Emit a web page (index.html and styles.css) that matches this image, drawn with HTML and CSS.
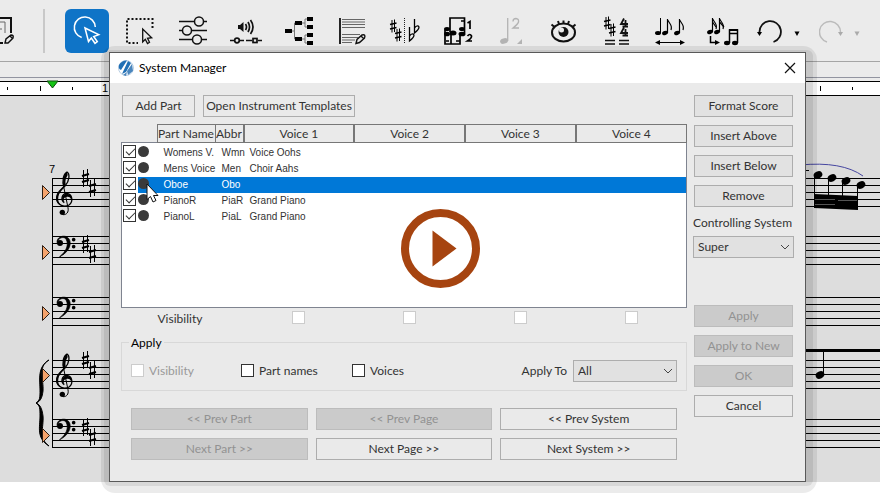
FILE: index.html
```html
<!DOCTYPE html>
<html lang="en">
<head>
<meta charset="utf-8">
<title>System Manager</title>
<link rel="stylesheet" href="styles.css">
</head>
<body>
<svg class="defs" aria-hidden="true">
  <defs>
    <g id="sharp"><path d="M-2 -8V9M2 -9V8" stroke="#000" stroke-width="1"/><path d="M-3.500 -2L3.500 -4M-3.500 4L3.500 2" stroke="#000" stroke-width="2.200"/></g>
    <g id="small-sharp"><path d="M-1 -6V6.500M1.500 -6.500V6" stroke="#000" stroke-width="1"/><path d="M-3 -1.500L3.500 -3M-3 3L3.500 1.500" stroke="#000" stroke-width="1.500"/></g>
    <g id="treble" transform="scale(.3333)">
      <path d="M27 50C20 28 26 8 36 3C45 8 44 30 30 45C14 60 5 70 5 84C7 103 28 110 42 102C56 92 52 68 35 67C20 68 16 87 28 95" fill="none" stroke="#000" stroke-width="4"/>
      <path d="M38 12C32 22 30 30 32 40C24 52 12 62 10 78C8 92 14 100 22 103C10 100 3 92 3 80C4 62 18 54 26 44C22 28 26 12 36 2Z"/>
      <path d="M35 69C50 66 56 88 43 98C54 92 48 74 34 78C27 79 24 84 27 92C18 86 20 70 35 69Z"/>
      <path d="M25 42L39 110C42 124 34 132 24 131" fill="none" stroke="#000" stroke-width="3"/>
      <circle cx="22" cy="124" r="8"/>
    </g>
    <g id="bass" transform="scale(.3333)">
      <path d="M3 22C3 6 18 2 28 4C50 10 50 46 10 66C32 48 38 30 31 14C26 4 10 6 6 18Z" stroke="#000" stroke-width="2"/>
      <circle cx="12" cy="24" r="9"/><circle cx="53" cy="14" r="5.500"/><circle cx="53" cy="35" r="5.500"/>
    </g>
    <path id="marker" d="M0 -7L7 0L0 7Z" fill="#f5a36c" stroke="#2b1c12" stroke-width="1"/>
    <path id="staff" d="M52 0H4000M52 7H4000M52 14H4000M52 21H4000M52 28H4000" stroke="#000" stroke-width="1"/>
    <g id="flag-note"><ellipse cx="0" cy="0" rx="3" ry="2" transform="rotate(-20)"/><path d="M2.500 0V-14C3 -10 8 -9 6 -3" fill="none" stroke="#000" stroke-width="1.200"/></g>
  </defs>
</svg>

<header class="toolbar">
  <button class="tool tool-cut" aria-label="Edit page"><svg width="16" height="44"><path d="M0 9H11V24" fill="none" stroke="#111" stroke-width="2"/><path d="M0 13H5V24M0 20H2" fill="none" stroke="#666"/><path d="M5 34L6 30L11 26Q14 26 13 29L8 34ZM10 27L13 30" fill="none" stroke="#111" stroke-width="1.400"/><path d="M0 34H3" stroke="#111" stroke-width="2"/></svg></button>
  <span class="separator"></span>
  <button class="tool active" aria-label="Select"><svg width="44" height="44" fill="none" stroke="#fff" stroke-width="1.500"><path d="M16.700 28.500A10.500 10.500 0 1 1 30.300 18"/><path d="M20 19L23.500 32.500L26.300 29L30 34.300L32.300 32.500L28.700 27.500L33.700 25.700Z"/></svg></button>
  <button class="tool" aria-label="Area select"><svg width="44" height="44" fill="none" stroke="#111"><path d="M34.500 19V10H9V34H20" stroke-width="2" stroke-dasharray="2 2"/><path d="M24.700 20V33L27.300 30.300L29.500 34.500L31.500 33.300L29.500 29.300L33.700 28.700Z" stroke-width="1.300"/></svg></button>
  <button class="tool" aria-label="Properties"><svg width="44" height="44" fill="#ebebeb" stroke="#111" stroke-width="1.500"><path d="M8 12.500H36M8 21.500H36M8 30.500H36"/><circle cx="28" cy="12.500" r="4.500"/><circle cx="16" cy="21.500" r="4.500"/><circle cx="26" cy="30.500" r="4.500"/></svg></button>
  <button class="tool" aria-label="Playback"><svg width="44" height="44" fill="none" stroke="#111" stroke-width="1.700"><path d="M14 16H16L19.500 13V23L16 20H14Z" fill="#111" stroke="none"/><path d="M21.500 15Q23.500 18 21.500 21M24 13Q27 18 24 23M26.500 11Q31.500 18 26.500 25"/><path d="M6 31.500H10.500M15.500 31.500H20M22 31.500H28M34 31.500H38"/><circle cx="13" cy="31.500" r="2.300"/><rect x="29" y="29.500" width="4" height="4"/></svg></button>
  <button class="tool" aria-label="Structure"><svg width="44" height="44"><path d="M15 22H17.500M21 14H17.500V30H21M25 14H28M30 10H28V18H30M25 30H28M30 26H28V34H30" fill="none" stroke="#777"/><path d="M8 20H15V24H8ZM18 12H25V16H18ZM18 28H25V32H18ZM30 8H36V12H30ZM30 16H36V20H30ZM30 24H36V28H30ZM30 32H36V36H30Z"/></svg></button>
  <button class="tool" aria-label="Edit text"><svg width="44" height="44" fill="none"><path d="M10 9V35" stroke="#000" stroke-width="1.700"/><path d="M12 10.500H35M12 13H35M12 15.500H35M12 18.500H35M12 25.500H30M12 28.500H28M12 31H25M12 33.500H22" stroke="#666"/><path d="M26 34.500L27 30.500L32 26Q36 25 34.500 29L29.500 33.500ZM31 27L34 30" stroke="#111" stroke-width="1.400"/></svg></button>
  <button class="tool" aria-label="Transpose"><svg width="44" height="44"><use href="#small-sharp" x="10" y="17"/><use href="#small-sharp" x="15" y="26"/><path d="M21.500 9V35" stroke="#222" stroke-dasharray="1 1"/><path d="M26.500 18V32C29 30 31 28 31 26C30 24 28 25 26.500 27M31.500 10V24C34 22 36 20 36 18C35 16 33 17 31.500 19" fill="none" stroke="#000" stroke-width="1.300"/></svg></button>
  <button class="tool" aria-label="Voices"><svg width="44" height="44" fill="none" stroke="#000" stroke-width="1.700"><path d="M14 23V9H28.500V24M25 12H28M9 21V35H24V24M15 25V35M10 32H13M20 32H24"/><g fill="#000" stroke="none"><ellipse cx="11" cy="20" rx="3" ry="2"/><ellipse cx="11" cy="25" rx="3" ry="2.300"/><ellipse cx="17" cy="24" rx="3.500" ry="2.500"/><ellipse cx="26" cy="20" rx="3" ry="2"/><ellipse cx="26" cy="25" rx="3.500" ry="2.300"/></g><path d="M31.500 14L34 12.500V20M31.500 27Q34 24 35.500 27Q36 29 31.500 32H36"/></svg></button>
  <button class="tool" aria-label="Note value" disabled><svg width="44" height="44" fill="none" stroke="#b3b3b3" stroke-width="1.300"><ellipse cx="15" cy="32" rx="4" ry="2.700" fill="#b3b3b3" stroke="none" transform="rotate(-15 15 32)"/><path d="M18.700 9V32M24 12.500Q24 9.500 27 9.500Q30 10 29.500 13Q29 15 24 19H30"/><path d="M33 30V35H28Z" fill="#b3b3b3" stroke="none"/></svg></button>
  <button class="tool" aria-label="View"><svg width="44" height="44" fill="none" stroke="#111" stroke-width="2"><ellipse cx="21.500" cy="23.500" rx="11.500" ry="9"/><circle cx="21.500" cy="23" r="5" fill="#111" stroke="none"/><circle cx="19.500" cy="21" r="2.500" fill="#ebebeb" stroke="none"/><path d="M12.500 18L9.500 15.500M17 15L16 12M21.500 14.500V11.500M26 15L27 12M30.500 18L33.500 15.500"/></svg></button>
  <button class="tool" aria-label="Signatures"><svg width="44" height="44" fill="none" stroke="#111" stroke-width="1.500"><use href="#small-sharp" x="12" y="14"/><use href="#small-sharp" x="17" y="21"/><path d="M29 9.500L26 15H33M30.500 11V18M27.500 17.500H33M29 18.500L26 24H33M30.500 20V26.500M27.500 26.500H33" stroke-width="1.800"/><path d="M10 31.500H20M10 35H20M24 31.500H34M24 35H34"/></svg></button>
  <button class="tool" aria-label="Note spacing"><svg width="44" height="44"><ellipse cx="10" cy="24" rx="3" ry="2"/><path d="M12.500 24V9M10 33.500H35" stroke="#000"/><use href="#flag-note" x="17" y="24"/><use href="#flag-note" x="29" y="24"/><path d="M7 33.500L12 31V36ZM37 33.500L32 31V36Z"/></svg></button>
  <button class="tool" aria-label="Rebeam"><svg width="44" height="44"><use href="#flag-note" x="9" y="23"/><use href="#flag-note" x="16" y="23"/><path d="M11.500 13L15 18M18.500 13L23 18" stroke="#000" stroke-width="1.200"/><path d="M9.500 27V33.500H15M28.500 34V21H36.500V34M28.500 24.500H36.500" fill="none" stroke="#000" stroke-width="1.500"/><path d="M14 31L19 33.500L14 36ZM28 20H37V22H28Z"/><ellipse cx="26" cy="34" rx="3" ry="2.200"/><ellipse cx="34" cy="34" rx="3" ry="2.200"/></svg></button>
  <div class="history">
    <button class="undo" aria-label="Undo"><svg width="30" height="44"><path d="M5.500 23A10.700 10.700 0 1 1 19.500 33" fill="none" stroke="#111" stroke-width="1.800"/><path d="M3 23H8L5.500 27Z"/></svg></button>
    <button class="undo-more" aria-label="Undo history"><svg width="26" height="44"><path d="M10.500 22.500H15.500L13 27Z"/></svg></button>
  </div>
  <div class="history">
    <button class="redo" aria-label="Redo" disabled><svg width="24" height="44"><path d="M21.500 23A10.500 10.500 0 1 0 8 33" fill="none" stroke="#bbb" stroke-width="1.500"/><path d="M19 23H24L21.500 27Z" fill="#aaa"/></svg></button>
    <button class="redo-more" aria-label="Redo history" disabled><svg width="28" height="44"><path d="M11.500 22.500H16.500L14 27Z" fill="#aaa"/></svg></button>
  </div>
</header>
<div class="strip"></div>
<div class="ruler"><svg width="100%" height="18"><path d="M7.500 5V8M72.500 5V8M852.500 5V8M40.500 4V9M820.500 4V9" stroke="#000"/><text x="102" y="10">1</text><path d="M47 -1H58L52.500 6Z" fill="#14c414" stroke="#0b4d0b"/></svg></div>

<main class="score">
  <svg width="100%" height="387"><g transform="translate(0 -96)">
    <use href="#staff" y="178.500"/><use href="#staff" y="236.500"/><use href="#staff" y="297.500"/><use href="#staff" y="360.500"/><use href="#staff" y="419.500"/>
    <path d="M52.500 178V448" stroke="#000"/>
    <text x="49" y="173">7</text>
    <use href="#treble" transform="translate(55 171)"/><use href="#treble" transform="translate(55 353)"/>
    <use href="#bass" transform="translate(56 235)"/><use href="#bass" transform="translate(56 296)"/><use href="#bass" transform="translate(56 418)"/>
    <use href="#sharp" x="85.500" y="178"/><use href="#sharp" x="92.500" y="188"/>
    <use href="#sharp" x="85.500" y="244"/><use href="#sharp" x="92.500" y="254"/>
    <use href="#sharp" x="85.500" y="360"/><use href="#sharp" x="92.500" y="370"/>
    <use href="#sharp" x="85.500" y="427"/><use href="#sharp" x="92.500" y="437"/>
    <path d="M49 360C37 367 44 380 43 391C42 399 40 401 36.500 403C40 405 42 408 43 416C44 427 38 438 49 446C36 438 40 427 40 416C40 408 40 406 36 403C40 400 40 398 40 390C40 380 37 367 49 360Z" stroke="#000"/>
    <use href="#marker" x="42.500" y="192.500"/><use href="#marker" x="42.500" y="252.500"/><use href="#marker" x="42.500" y="313.500"/><use href="#marker" x="42.500" y="375.500"/><use href="#marker" x="42.500" y="435.500"/>
    <path d="M800 165Q842 161 863 176" fill="none" stroke="#4646a0"/>
    <path d="M814.500 176V208M828.500 179V208M842.500 182V208M857.500 186V208M800 170.500H809" stroke="#000"/>
    <path d="M814 194L858 196V210L836 209L814 208Z"/>
    <path d="M815 199.500H835M815 204.500H835M838 200.500H857" stroke="#555"/>
    <g><ellipse cx="818" cy="175" rx="4.500" ry="3.500" transform="rotate(-25 818 175)"/><ellipse cx="832" cy="178" rx="4.500" ry="3.500" transform="rotate(-25 832 178)"/><ellipse cx="846" cy="181" rx="4.500" ry="3.500" transform="rotate(-25 846 181)"/><ellipse cx="861" cy="185" rx="4.500" ry="3.500" transform="rotate(-25 861 185)"/><ellipse cx="820" cy="375" rx="4.500" ry="3.500" transform="rotate(-25 820 375)"/></g>
    <path d="M823.500 351V374" stroke="#000"/><path d="M800 349H4000V352H800Z"/>
  </g></svg>
</main>

<section class="dialog" role="dialog" aria-labelledby="dialog-title">
  <div class="titlebar">
    <svg width="16" height="16"><circle cx="8" cy="8" r="7.500" fill="#fff" stroke="#b9cfe4"/><path d="M1 5Q4 0 9 0.500L3 10Q0 9 1 5ZM10 1L4 14L8 12L13 3Z" fill="#1f6fb5"/><path d="M14 4L9 11L10 15L15 11ZM5 15L9 12L8 16Z" fill="#4a86bd"/></svg>
    <h1 id="dialog-title">System Manager</h1>
    <button class="close" aria-label="Close"><svg width="12" height="12"><path d="M1 1L11 11M11 1L1 11" stroke="#111" stroke-width="1.200"/></svg></button>
  </div>
  <div class="content">
    <div class="primary">
      <div class="actions"><button class="btn add">Add Part</button><button class="btn templates">Open Instrument Templates</button></div>
      <table class="parts">
        <colgroup><col class="c-check"><col class="c-dot"><col class="c-name"><col class="c-abbr"><col><col><col><col></colgroup>
        <thead><tr><td colspan="2"></td><th>Part Name</th><th>Abbr</th><th class="voice">Voice 1</th><th class="voice">Voice 2</th><th class="voice">Voice 3</th><th class="voice">Voice 4</th></tr></thead>
        <tbody>
          <tr class="lead"><td colspan="8"></td></tr>
          <tr><td><input type="checkbox" checked aria-label="Womens V."></td><td><span class="dot"></span></td><td>Womens V.</td><td>Wmn</td><td>Voice Oohs</td><td></td><td></td><td></td></tr>
          <tr><td><input type="checkbox" checked aria-label="Mens Voice"></td><td><span class="dot"></span></td><td>Mens Voice</td><td>Men</td><td>Choir Aahs</td><td></td><td></td><td></td></tr>
          <tr class="selected"><td><input type="checkbox" checked aria-label="Oboe"></td><td><span class="dot"></span><svg class="pointer" width="14" height="21"><path d="M1 1V16.500L4.500 13.500L7 19L10 17.500L7.500 12.500H12Z" fill="#fff" stroke="#111"/></svg></td><td>Oboe</td><td>Obo</td><td></td><td></td><td></td><td></td></tr>
          <tr><td><input type="checkbox" checked aria-label="PianoR"></td><td><span class="dot"></span></td><td>PianoR</td><td>PiaR</td><td>Grand Piano</td><td></td><td></td><td></td></tr>
          <tr><td><input type="checkbox" checked aria-label="PianoL"></td><td><span class="dot"></span></td><td>PianoL</td><td>PiaL</td><td>Grand Piano</td><td></td><td></td><td></td></tr>
          <tr class="rest"><td colspan="8"></td></tr>
        </tbody>
        <tfoot><tr><td colspan="2"></td><td colspan="2" class="foot-label">Visibility</td><td><input type="checkbox" disabled aria-label="Voice 1 visibility"></td><td><input type="checkbox" disabled aria-label="Voice 2 visibility"></td><td><input type="checkbox" disabled aria-label="Voice 3 visibility"></td><td><input type="checkbox" disabled aria-label="Voice 4 visibility"></td></tr></tfoot>
      </table>
      <fieldset>
        <legend>Apply</legend>
        <div class="options">
          <label class="off"><input type="checkbox" disabled>Visibility</label>
          <label><input type="checkbox">Part names</label>
          <label><input type="checkbox">Voices</label>
          <label class="apply-to" for="apply-to">Apply To</label>
          <select id="apply-to"><option>All</option></select>
        </div>
      </fieldset>
      <div class="pager">
        <button class="btn" disabled>&lt;&lt; Prev Part</button><button class="btn" disabled>&lt;&lt; Prev Page</button><button class="btn">&lt;&lt; Prev System</button>
        <button class="btn" disabled>Next Part &gt;&gt;</button><button class="btn">Next Page &gt;&gt;</button><button class="btn">Next System &gt;&gt;</button>
      </div>
    </div>
    <div class="side">
      <div class="stack"><button class="btn tint">Format Score</button><button class="btn tint">Insert Above</button><button class="btn tint">Insert Below</button><button class="btn tint">Remove</button></div>
      <label for="system">Controlling System</label>
      <select id="system"><option>Super</option></select>
      <div class="stack last"><button class="btn" disabled>Apply</button><button class="btn" disabled>Apply to New</button><button class="btn" disabled>OK</button><button class="btn">Cancel</button></div>
    </div>
  </div>
</section>
<button class="play" aria-label="Play video"><svg width="79" height="79"><circle cx="39.500" cy="39.500" r="35.500" fill="#fff" stroke="#a64410" stroke-width="8"/><path d="M31.500 21.500L55.500 39.500L31.500 57.500Z" fill="#a64410"/></svg></button>
</body>
</html>
```
FILE: styles.css
```css
* { box-sizing: border-box; }
body {
  margin: 0;
  min-height: 100vh;
  position: relative;
  overflow: hidden;
  background: #fff;
  color: #333;
  font: 12px/16px Lato, "Noto Sans", sans-serif;
}
svg { display: block; }
button, select { font: inherit; color: inherit; }
.defs { position: absolute; width: 0; height: 0; }

/* Toolbar */
.toolbar {
  display: flex;
  gap: 9px;
  height: 61px;
  padding-top: 9px;
  background: #ebebeb;
}
.toolbar button {
  flex: none;
  height: 44px;
  padding: 0;
  border: 0;
  background: none;
}
.toolbar .tool { width: 44px; border-radius: 6px; }
.toolbar .tool-cut { width: 16px; }
.toolbar .active { background: #0f74c7; }
.separator {
  flex: none;
  width: 2px;
  height: 44px;
  margin: 0 11px 0 18px;
  background: #c8c8c8;
}
.history { display: flex; }
.undo { width: 30px; }
.undo-more { width: 26px; }
.redo { width: 24px; }
.redo-more { width: 28px; }
.strip {
  height: 17px;
  border: solid #a5a5a5;
  border-width: 1px 0;
  border-bottom-color: #9294a0;
  background: #ebebeb;
}
.ruler {
  border-top: 3px solid #ebebeb;
  background: #fff;
}
.ruler svg {
  height: 15px;
  border: solid #000;
  border-width: 1px 0;
  overflow: visible;
}
.ruler text, .score text { font: 11px "Liberation Sans", sans-serif; }

/* Score */
.score { height: 386px; background: #ddd; overflow: hidden; }

/* Dialog */
.dialog {
  position: absolute;
  top: 52px;
  left: 109px;
  right: 74px;
  z-index: 1;
  border: 1px solid #6a6a6a;
  background: #eaeaea;
}
.dialog::before, .dialog::after {
  content: "";
  position: absolute;
  z-index: -2;
  inset: -7px -12px -12px -9px;
  border-radius: 14px;
  background: rgba(0, 0, 0, .08);
}
.dialog::after {
  inset: -3px -8px -5px -6px;
  border-radius: 6px;
}
.titlebar, .content { position: relative; background: #eaeaea; }
.titlebar {
  display: flex;
  align-items: center;
  gap: 5px;
  height: 30px;
  padding: 0 9px 0 8px;
  background: #fff;
}
.titlebar h1 { margin: 0; font: inherit; color: #000; }
.close {
  margin-left: auto;
  padding: 0;
  border: 0;
  background: none;
}
.content {
  display: flex;
  gap: 6px;
  padding: 12px 10px 21px 11px;
}
.primary { flex: 1; min-width: 0; }
.side { flex: none; width: 102px; }
.btn {
  height: 22px;
  padding: 0;
  border: 1px solid #adadad;
  border-radius: 0;
  background: #eaeaea;
  line-height: 16px;
  white-space: nowrap;
}
.btn.tint { background: #e2e2e2; }
.btn:disabled { border-color: #bcbcbc; background: #cbcbcb; color: #929292; }
.actions { display: flex; gap: 8px; padding-left: 1px; }
.add { width: 73px; }
.templates { width: 152px; }

/* Parts table */
.parts {
  width: 100%;
  margin-top: 7px;
  table-layout: fixed;
  border-collapse: collapse;
}
.c-check { width: 16px; }
.c-dot { width: 20px; }
.c-name { width: 58px; }
.c-abbr { width: 28px; }
.parts td, .parts th { padding: 0; height: 16px; font-weight: normal; white-space: nowrap; }
.parts th {
  height: 18px;
  border: 1px solid #777;
  text-align: left;
}
.parts th.voice { text-align: center; border-width: 1px 1px 1px 2px; }
.parts tbody {
  border: 1px solid #7f8490;
  background: #fff;
  line-height: 14px;
}
.parts tbody td:nth-child(n+3) { padding-left: 6px; font: 10px/16px "Liberation Sans", sans-serif; }
.parts tbody td:nth-child(2) { position: relative; }
.parts .lead td { height: 2px; }
.parts .rest td { height: 83px; }
.parts .selected td:nth-child(n+2) { background: #0078d7; color: #fff; }
.parts tfoot td { height: 22px; text-align: center; }
.parts tfoot .foot-label { text-align: left; }
.dot {
  display: block;
  width: 11px;
  height: 11px;
  margin: 0 0 2px;
  border-radius: 50%;
  background: #3a3a3a;
}
.pointer { position: absolute; left: 8px; top: 6px; z-index: 1; }

input[type="checkbox"] {
  appearance: none;
  display: block;
  width: 13px;
  height: 13px;
  margin: 0;
  border: 1px solid #333;
  background: #fff;
}
input[type="checkbox"]:disabled { border-color: #ccc; }
input[type="checkbox"]:checked::before {
  content: "";
  display: block;
  width: 8px;
  height: 4px;
  margin: 2px 0 0 2px;
  border: solid #333;
  border-width: 0 0 1px 1px;
  transform: rotate(-45deg);
}
.parts tbody input { margin: 0 0 2px 1px; }
.parts tfoot input { margin: 0 auto 2px; }

/* Apply group */
fieldset {
  min-width: 0;
  margin: 5px 0 0;
  padding: 9px 9px 8px;
  border: 1px solid #d8d8d8;
}
legend { margin-left: -2px; padding: 0 2px; color: #000; }
.options {
  display: grid;
  grid-template-columns: 110px 111px 1fr auto 104px;
  align-items: center;
}
.options label { display: flex; align-items: center; gap: 5px; }
.options .off { color: #999; }
.options .apply-to { margin-right: 6px; }
select {
  appearance: none;
  width: 100%;
  height: 22px;
  padding: 0 4px;
  border: 1px solid #adadad;
  border-radius: 0;
  background: #e1e1e1 url("data:image/svg+xml,%3Csvg xmlns='http://www.w3.org/2000/svg' width='10' height='6'%3E%3Cpath d='M1 1L5 5L9 1' fill='none' stroke='%23444'/%3E%3C/svg%3E") no-repeat right 3px center;
}
.pager {
  display: grid;
  grid-template-columns: repeat(3, 1fr);
  gap: 8px;
  margin-top: 17px;
  padding: 0 10px;
}

/* Side column */
.stack { display: grid; gap: 8px; padding: 0 2px 0 1px; }
.side label { display: block; margin: 8px 0 5px; white-space: nowrap; }
.side select { width: 101px; display: block; }
.stack.last { margin-top: 47px; }

.play {
  position: absolute;
  inset: 0;
  z-index: 2;
  width: 79px;
  height: 79px;
  margin: auto;
  padding: 0;
  border: 0;
  background: none;
}
```
